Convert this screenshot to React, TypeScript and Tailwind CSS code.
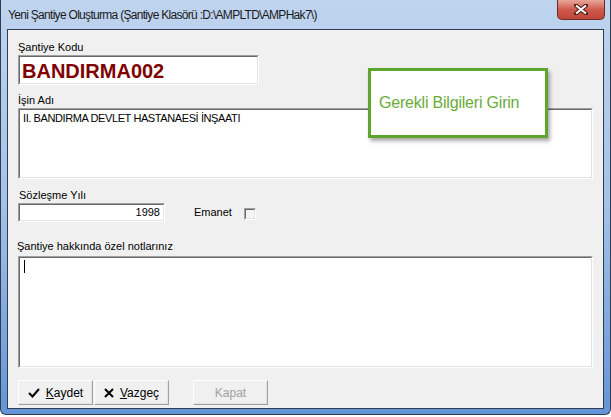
import React from "react";

const sunken =
  "border border-t-[#a0a0a0] border-l-[#a0a0a0] border-b-white border-r-white";
const sunkenInner =
  "border border-t-[#696969] border-l-[#696969] border-b-[#e3e3e3] border-r-[#e3e3e3] bg-white";

function Field({ className, children }: { className: string; children?: React.ReactNode }) {
  return (
    <div className={`${sunken} ${className}`}>
      <div className={`${sunkenInner} w-full h-full`}>{children}</div>
    </div>
  );
}

function Btn({ children, disabled }: { children: React.ReactNode; disabled?: boolean }) {
  return (
    <div className="w-[75px] h-[25px] border border-t-white border-l-white border-b-[#a0a0a0] border-r-[#a0a0a0] bg-[#f0f0f0]">
      <div
        className={`w-full h-full border border-b-[#e3e3e3] border-r-[#e3e3e3] border-t-[#f0f0f0] border-l-[#f0f0f0] flex items-center justify-center gap-[6px] text-[12px] ${
          disabled ? "text-[#a0a0a0]" : "text-black"
        }`}
      >
        {children}
      </div>
    </div>
  );
}

export default function App() {
  return (
    <div
      className="w-[611px] h-[417px] bg-white"
      style={{ fontFamily: '"Liberation Sans", Arial, sans-serif' }}
    >
      <div className="relative w-[611px] h-[415px] rounded-b-[6px] border border-t-0 border-[#2f3d52] bg-gradient-to-b from-[#bfd4ee] via-[#a4c1e7] to-[#6494d6] flex flex-col">
        {/* Title bar */}
        <div className="h-[29px] flex items-center pl-[7px] text-[12px] tracking-[-0.7px] text-[#1b1b1b]">
          Yeni Şantiye Oluşturma (Şantiye Klasörü :D:\AMPLTD\AMPHak7\)
        </div>
        <div className="absolute left-[556px] top-0 w-[48px] h-[20px] rounded-b-[5px] border border-t-0 border-[#6b2b24] bg-gradient-to-b from-[#e6a79c] via-[#cf5a4c] to-[#c0453a] flex items-center justify-center">
          <svg width="14" height="11" viewBox="0 0 14 11">
            <path d="M2 1.5 L12 9.5 M12 1.5 L2 9.5" stroke="#4a1a14" strokeWidth="4" strokeLinecap="square" fill="none" />
            <path d="M2 1.5 L12 9.5 M12 1.5 L2 9.5" stroke="#ffffff" strokeWidth="2.2" fill="none" />
          </svg>
        </div>

        {/* Client area */}
        <div className="mx-[6px] h-[380px] border border-[#2f3d52] bg-[#f0f0f0] relative pl-[10px] pt-[11px]">
          <div className="text-[11px] leading-[13px] h-[13px]">Şantiye Kodu</div>
          <Field className="mt-[1px] w-[241px] h-[30px]">
            <div className="pl-[2px] pt-[1px] text-[20px] font-bold text-[#800000] leading-[26px]">
              BANDIRMA002
            </div>
          </Field>

          <div className="mt-[9px] text-[11px] leading-[13px] h-[13px]">İşin Adı</div>
          <Field className="mt-[1px] w-[575px] h-[71px]">
            <div className="pl-[3px] pt-[2px] text-[11px] leading-[13px] tracking-[-0.4px]">
              II. BANDIRMA DEVLET HASTANAESİ İNŞAATI
            </div>
          </Field>

          <div className="mt-[10px] text-[11px] leading-[13px] h-[13px] pl-[1px]">Sözleşme Yılı</div>
          <div className="mt-[1px] flex items-center">
            <Field className="w-[147px] h-[19px]">
              <div className="pr-[3px] text-right text-[11px] leading-[15px]">1998</div>
            </Field>
            <span className="ml-[29px] text-[11px]">Emanet</span>
            <div className="ml-[12px] mt-[2px] w-[12px] h-[12px] border border-t-[#a0a0a0] border-l-[#a0a0a0] border-b-white border-r-white">
              <div className="w-full h-full border border-t-[#696969] border-l-[#696969] border-b-[#e3e3e3] border-r-[#e3e3e3] bg-[#f4f4f4]" />
            </div>
          </div>

          <div className="mt-[18px] text-[11px] leading-[13px] h-[13px] -ml-[1px]">
            Şantiye hakkında özel notlarınız
          </div>
          <Field className="mt-[3px] w-[575px] h-[112px]">
            <div className="ml-[4px] mt-[2px] w-[1px] h-[13px] bg-black" />
          </Field>

          <div className="mt-[12px] flex">
            <Btn>
              <svg width="12" height="10" viewBox="0 0 12 10">
                <path d="M1 5 L4.5 8.5 L11 1" stroke="#000" strokeWidth="2" fill="none" />
              </svg>
              <span>
                <span className="underline">K</span>aydet
              </span>
            </Btn>
            <div className="w-[1px]" />
            <Btn>
              <svg width="10" height="10" viewBox="0 0 10 10">
                <path d="M1 1 L9 9 M9 1 L1 9" stroke="#000" strokeWidth="2" fill="none" />
              </svg>
              <span>
                <span className="underline">V</span>azgeç
              </span>
            </Btn>
            <div className="w-[24px]" />
            <Btn disabled>Kapat</Btn>
          </div>

          {/* Tooltip overlay */}
          <div className="absolute left-[360px] top-[38px] w-[180px] h-[70px] bg-white border-[3px] border-[#5ea52e] shadow-[2px_3px_4px_rgba(0,0,0,0.35)] flex items-center pl-[8px]">
            <span className="text-[16px] text-[#6aab3a] tracking-[-0.2px]">Gerekli Bilgileri Girin</span>
          </div>
        </div>
      </div>
    </div>
  );
}
